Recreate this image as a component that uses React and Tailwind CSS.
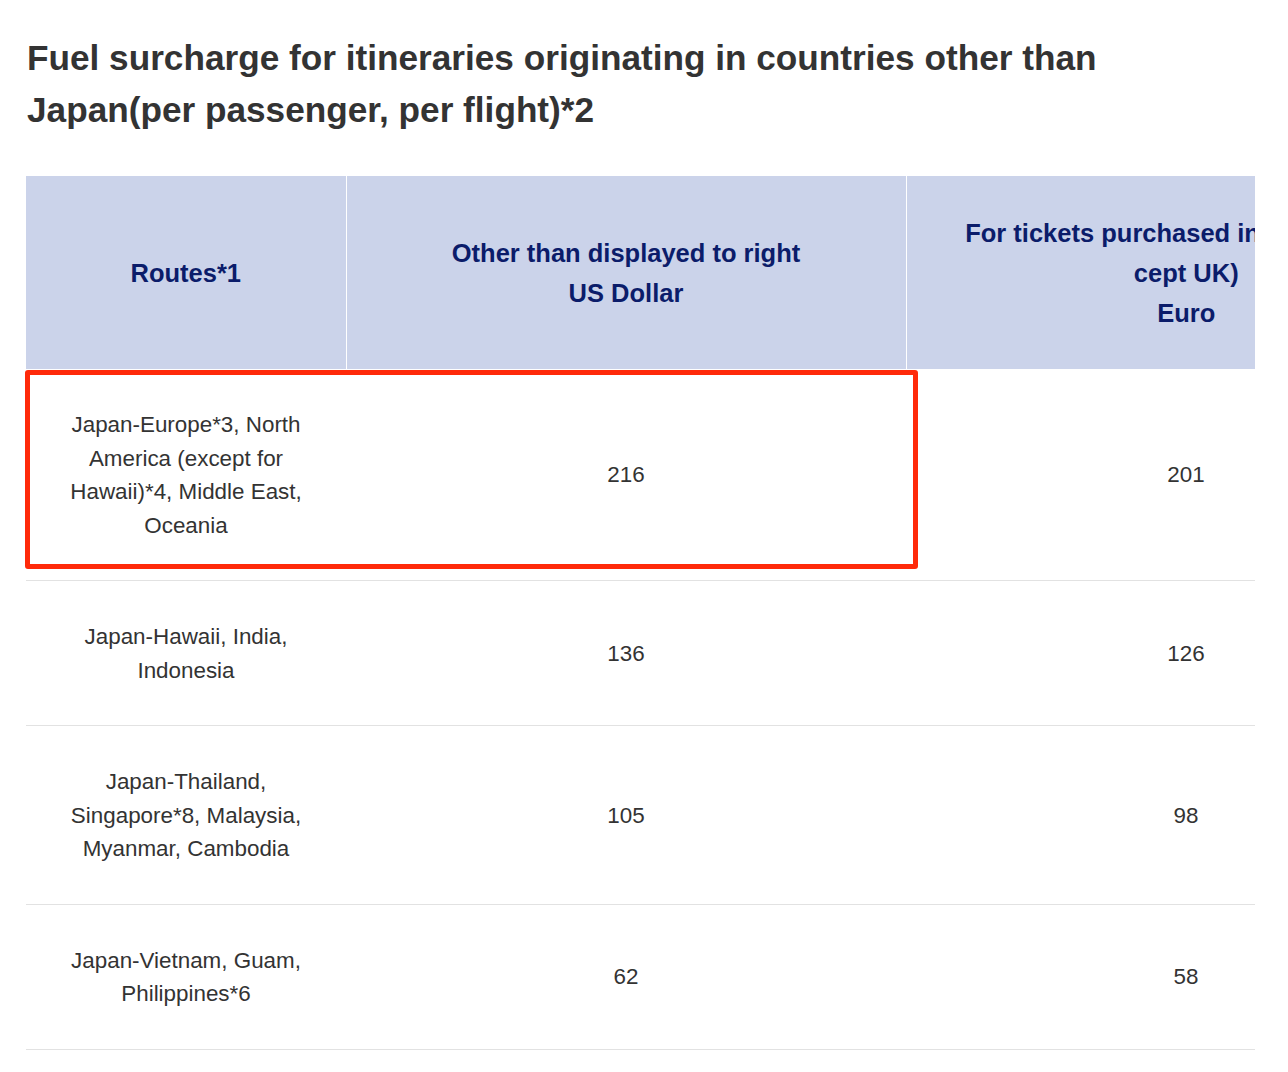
import React from "react";

const rows = [
  { route: "Japan-Europe*3, North America (except for Hawaii)*4, Middle East, Oceania", usd: "216", eur: "201" },
  { route: "Japan-Hawaii, India, Indonesia", usd: "136", eur: "126" },
  { route: "Japan-Thailand, Singapore*8, Malaysia, Myanmar, Cambodia", usd: "105", eur: "98" },
  { route: "Japan-Vietnam, Guam, Philippines*6", usd: "62", eur: "58" },
];

export default function App() {
  return (
    <div className="bg-white w-[1288px] h-[1072px] overflow-hidden" style={{ fontFamily: '"Liberation Sans", Arial, Helvetica, sans-serif' }}>
      <h1 className="pt-[32px] pl-[27px] pr-[20px] text-[35.2px] leading-[52px] font-bold text-[#333333]">
        Fuel surcharge for itineraries originating in countries other than
        <br />
        Japan(per passenger, per flight)*2
      </h1>
      <div className="relative mt-[40px] ml-[26px] w-[1229px]">
        <div className="w-[1229px] overflow-hidden">
          <table className="table-fixed border-collapse w-[1440px]">
            <colgroup>
              <col className="w-[320px]" />
              <col className="w-[560px]" />
              <col className="w-[560px]" />
            </colgroup>
            <thead>
              <tr className="bg-[#cbd3ea] text-[#0b1c6a] text-[25.5px] font-bold leading-[40px]">
                <th className="h-[193px] align-middle text-center border-r border-white">Routes*1</th>
                <th className="h-[193px] align-middle text-center border-r border-white">
                  Other than displayed to right
                  <br />
                  US Dollar
                </th>
                <th className="h-[193px] align-middle text-center whitespace-nowrap">
                  For tickets purchased in Europe (ex-
                  <br />
                  cept UK)
                  <br />
                  Euro
                </th>
              </tr>
            </thead>
            <tbody className="text-[22.4px] leading-[33.5px] text-[#333333]">
              {rows.map((r, i) => (
                <tr key={i} className="border-b border-[#e2e2e2]">
                  <td className="pt-[39px] pb-[38px] px-[40px] text-center align-middle">{r.route}</td>
                  <td className="pt-[39px] pb-[38px] text-center align-middle">{r.usd}</td>
                  <td className="pt-[39px] pb-[38px] text-center align-middle">{r.eur}</td>
                </tr>
              ))}
            </tbody>
          </table>
        </div>
        <div className="absolute left-[-1px] top-[194px] w-[893px] h-[199px] border-[5px] border-[#ff2a0a] rounded-[3px] pointer-events-none" />
      </div>
    </div>
  );
}
